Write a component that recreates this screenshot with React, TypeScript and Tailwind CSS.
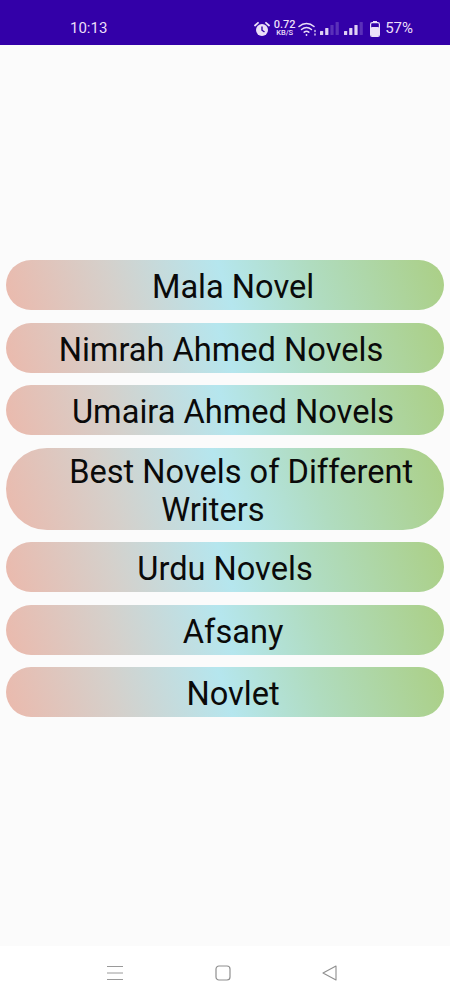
import React from 'react';

// leading / trailing spaces are in the labels on purpose, they push the centred text sideways
const novels = [
  '  Mala Novel',
  'Nimrah Ahmed Novels ',
  '  Umaira Ahmed Novels',
  '    Best Novels of Different\nWriters   ',
  'Urdu Novels',
  '  Afsany',
  '  Novlet',
];

const Signal: React.FC<{ lit: number }> = ({ lit }) => (
  <svg width="21" height="16" viewBox="0 0 21 16" fill="#e9dcf8">
    {[0, 1, 2, 3].map(i => (
      <rect key={i} x={i * 5.2 + 1} y={10 - i * 3} width="3.2" height={4 + i * 3} rx="0.6" opacity={i < lit ? 0.95 : 0.22} />
    ))}
  </svg>
);

const StatusBar = () => (
  <div className="h-[45px] shrink-0 bg-[#3300a8] flex items-center justify-between pl-[70px] pr-[37px] pt-[12px] text-[#ebdff8] font-['Roboto',sans-serif]">
    <span className="text-[15px] leading-none">10:13</span>
    <div className="flex items-center">
      <svg width="16" height="16" viewBox="0 0 16 16" className="mr-[5px]">
        <circle cx="8" cy="9" r="6" fill="#ebdff8" />
        <path d="M1 4.5 4 1.8M15 4.5 12 1.8" stroke="#ebdff8" strokeWidth="1.8" strokeLinecap="round" />
        <path d="M8 5.5V9.2L10.5 11" stroke="#3300a8" strokeWidth="1.4" fill="none" />
      </svg>
      <div className="flex flex-col items-center w-[19px] mr-[4px] font-medium">
        <span className="text-[11px] leading-[9px]">0.72</span>
        <span className="text-[7.5px] leading-[8px]">KB/S</span>
      </div>
      <svg width="19" height="16" viewBox="0 0 19 16" fill="none" stroke="#ebdff8" strokeWidth="1.5" strokeLinecap="round" className="mr-[2px]">
        <path d="M1 5.5C5.5 1.5 11.5 1.5 16 5.5" />
        <path d="M3.5 8.5C6.5 6 10.5 6 13.5 8.5" />
        <path d="M6.2 11.2C7.6 10.1 9.4 10.1 10.8 11.2" />
        <circle cx="8.5" cy="14" r="0.9" fill="#ebdff8" stroke="none" />
        <path d="M17 9.5v1M17 13v1" strokeWidth="1.3" />
      </svg>
      <div className="mr-[3px]"><Signal lit={2} /></div>
      <div className="mr-[6px]"><Signal lit={3} /></div>
      <svg width="10" height="16" viewBox="0 0 10 16" className="mr-[5px]">
        <rect x="3" y="0" width="4" height="2" fill="#ebdff8" />
        <rect x="0.6" y="1.6" width="8.8" height="13.8" rx="1.6" fill="none" stroke="#ebdff8" strokeWidth="1.2" />
        <rect x="1" y="6" width="8" height="9" rx="1" fill="#ebdff8" />
      </svg>
      <span className="text-[15px] leading-none">57%</span>
    </div>
  </div>
);

const NavBar = () => (
  <div className="h-[54px] shrink-0 bg-white flex items-center pl-[107px] pr-[113px] justify-between pb-[1px]">
    <svg width="16" height="16" viewBox="0 0 16 16" stroke="#9a9a9a" strokeWidth="1">
      <path d="M0 1.5H16M0 8H16M0 14.5H16" />
    </svg>
    <svg width="16" height="16" viewBox="0 0 16 16" fill="none" stroke="#8f8f8f" strokeWidth="1.2">
      <rect x="1" y="1" width="14" height="14" rx="3" />
    </svg>
    <svg width="15" height="16" viewBox="0 0 15 16" fill="none" stroke="#8f8f8f" strokeWidth="1.1" strokeLinejoin="round">
      <path d="M14 1 1 8l13 7z" />
    </svg>
  </div>
);

export default function App() {
  return (
    <div className="w-[450px] h-[1000px] flex flex-col bg-[#fbfbfb] overflow-hidden font-['Roboto',sans-serif]">
      <StatusBar />
      <div className="flex-1 flex flex-col gap-[12.5px] px-[6px] pt-[215px]">
        {novels.map(name => (
          <button
            key={name}
            className="w-full min-h-[50px] rounded-full bg-[linear-gradient(72deg,#ebb9ac_0%,#d5d0cb_25%,#b5e6ee_50%,#b0dcc0_70%,#abcf85_100%)] text-[#0a0a0a] text-[32.6px] leading-[38px] text-center whitespace-pre pt-[5px] pb-[1px] flex items-center justify-center"
          >
            {name}
          </button>
        ))}
      </div>
      <NavBar />
    </div>
  );
}
